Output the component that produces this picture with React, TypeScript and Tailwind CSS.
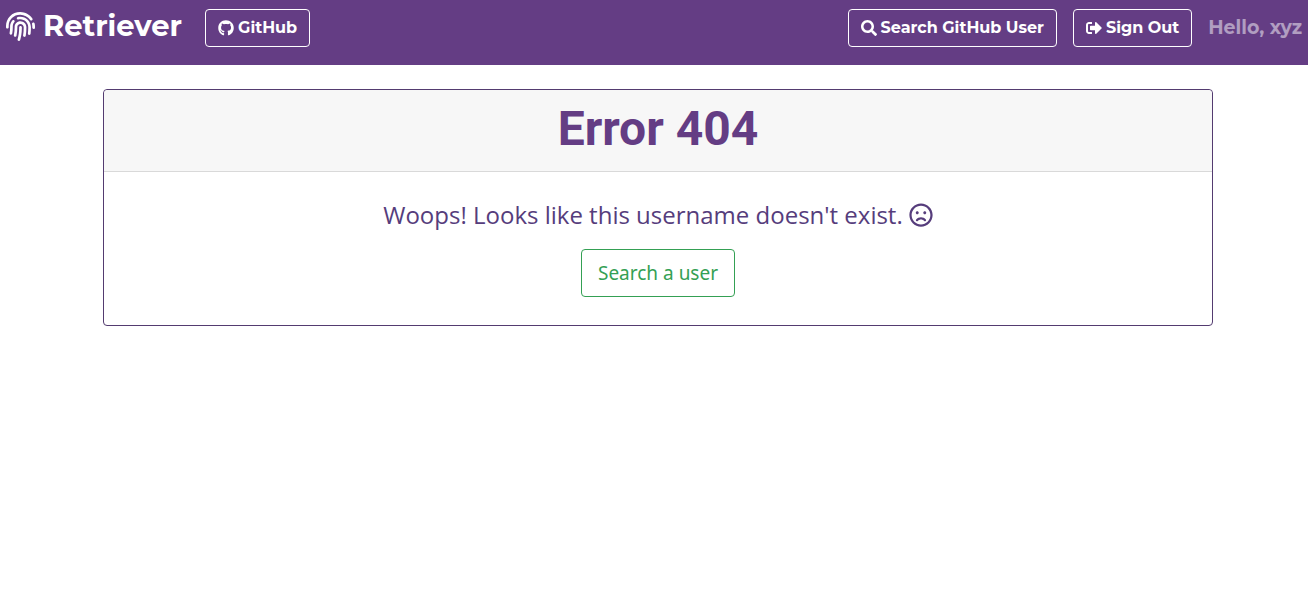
import { FaFingerprint, FaGithub, FaSearch, FaSignOutAlt, FaRegFrown } from "react-icons/fa";

const navButton =
  "flex h-[38px] items-center gap-1 rounded border border-white px-3 text-base font-bold text-white";

export default function App() {
  return (
    <div className="min-h-screen bg-white font-['Open_Sans',sans-serif]">
      <nav className="flex h-[65px] items-start justify-between bg-[#643d84] px-[6px] pt-[9px] font-['Montserrat','Inter',sans-serif]">
        <div className="flex items-start gap-[23px]">
          <a href="#" className="flex h-[34px] items-center gap-2 text-[29px] font-bold text-white">
            <FaFingerprint />
            Retriever
          </a>
          <a href="#" className={navButton}>
            <FaGithub />
            GitHub
          </a>
        </div>
        <div className="flex items-center gap-4">
          <button type="button" className={navButton}>
            <FaSearch />
            Search GitHub User
          </button>
          <button type="button" className={navButton}>
            <FaSignOutAlt />
            Sign Out
          </button>
          <span className="text-[19px] leading-6 font-bold text-white/50">Hello, xyz</span>
        </div>
      </nav>
      <div className="pt-6 pl-2">
        <main className="mx-auto max-w-[1110px] rounded border border-[#533b70] text-center text-[#563d7c]">
          <header className="rounded-t border-b border-[#d9d9d9] bg-[#f7f7f7] pt-3 pb-4">
            <h1 className="font-['Roboto',sans-serif] text-[48px] leading-[53px] font-bold text-[#643d84]">Error 404</h1>
          </header>
          <div className="flex flex-col items-center gap-4 px-5 pt-[25px] pb-7">
            <p className="flex items-center gap-[6px] text-2xl leading-9">
              Woops! Looks like this username doesn't exist.
              <FaRegFrown />
            </p>
            <button type="button" className="h-12 rounded border border-[#34a054] px-4 font-['Noto_Sans',sans-serif] text-[19px] text-[#34a054]">
              Search a user
            </button>
          </div>
        </main>
      </div>
    </div>
  );
}
